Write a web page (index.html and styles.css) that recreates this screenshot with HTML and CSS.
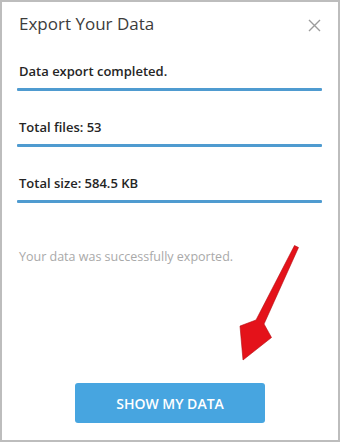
FILE: index.html
```html
<!DOCTYPE html>
<html>
<head>
<meta charset="utf-8">
<link rel="stylesheet" href="styles.css">
</head>
<body>
<div class="dialog">
  <div class="header">
    <div class="title">Export Your Data</div>
    <svg class="close" width="13" height="13" viewBox="0 0 13 13"><path d="M1 1L12 12M12 1L1 12" stroke="#9c9c9c" stroke-width="1.4" fill="none"/></svg>
  </div>
  <div class="fields">
    <div class="field">
      <div class="field-label">Data export completed.</div>
      <div class="field-bar"></div>
    </div>
    <div class="field">
      <div class="field-label">Total files: 53</div>
      <div class="field-bar"></div>
    </div>
    <div class="field">
      <div class="field-label">Total size: 584.5 KB</div>
      <div class="field-bar"></div>
    </div>
  </div>
  <div class="status">Your data was successfully exported.</div>
  <div class="actions">
    <button class="btn">SHOW MY DATA</button>
  </div>
  <svg class="arrow" width="340" height="442" viewBox="0 0 340 442">
    <polygon points="294.5,245.5 298.5,247.5 264,324 271.5,337.5 243,360 240,326 256,320" fill="#e4121a" stroke="#b30a0f" stroke-width="0.6" stroke-linejoin="round"/>
  </svg>
</div>
</body>
</html>
```

FILE: styles.css
```css
html, body {
  margin: 0;
  padding: 0;
  background: #fff;
}
.dialog {
  position: relative;
  box-sizing: border-box;
  width: 340px;
  height: 442px;
  border: 2px solid #bdbdbd;
  display: flex;
  flex-direction: column;
  padding: 0 16px 17px 15px;
  font-family: "Open Sans", sans-serif;
}
.header {
  display: flex;
  justify-content: space-between;
  align-items: center;
  padding-top: 10px;
  padding-left: 2px;
}
.title {
  font-size: 17px;
  line-height: 24px;
  color: #3c3c3c;
}
.close {
  margin-right: 1px;
  margin-top: 2px;
}
.fields {
  display: flex;
  flex-direction: column;
  gap: 27px;
  margin-top: 26px;
}
.field-label {
  font-weight: 600;
  font-size: 13px;
  line-height: 18px;
  color: #252525;
  padding-left: 2px;
  padding-bottom: 8px;
}
.field-bar {
  height: 3px;
  background: #4f9bd0;
  border-radius: 1px;
}
.status {
  margin-top: 45px;
  padding-left: 2px;
  font-size: 12.5px;
  line-height: 18px;
  color: #a9a9a9;
}
.actions {
  margin-top: auto;
  display: flex;
  justify-content: center;
  padding-left: 1px;
}
.btn {
  width: 190px;
  height: 40px;
  border: none;
  border-radius: 3px;
  background: #47a5e0;
  color: #fff;
  font-family: "Open Sans", sans-serif;
  font-weight: 600;
  font-size: 14px;
  padding: 0;
}
.arrow {
  position: absolute;
  left: -2px;
  top: -2px;
  pointer-events: none;
}
```
